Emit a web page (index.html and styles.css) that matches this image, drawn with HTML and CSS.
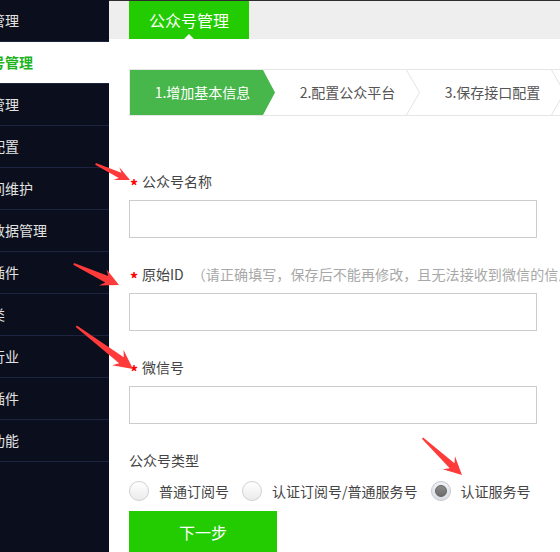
FILE: index.html
```html
<!DOCTYPE html>
<html lang="zh-CN">
<head>
<meta charset="utf-8">
<title>公众号管理</title>
<link rel="stylesheet" href="styles.css">
</head>
<body>
<div class="page">
  <aside class="sidebar">
    <ul class="nav">
      <li class="nav-item">管理</li>
      <li class="nav-item active">号管理</li>
      <li class="nav-item">管理</li>
      <li class="nav-item">配置</li>
      <li class="nav-item">间维护</li>
      <li class="nav-item">数据管理</li>
      <li class="nav-item">插件</li>
      <li class="nav-item">类</li>
      <li class="nav-item">行业</li>
      <li class="nav-item">插件</li>
      <li class="nav-item">功能</li>
    </ul>
  </aside>
  <main class="main">
    <div class="tabbar">
      <div class="tab">公众号管理</div>
    </div>
    <div class="content">
      <div class="steps">
        <div class="step step-active">1.增加基本信息</div>
        <div class="step">2.配置公众平台<svg class="chev" width="14" height="45" viewBox="0 0 14 45"><polyline points="0.5,0 13.5,22.5 0.5,45" fill="none" stroke="#e3e3e3" stroke-width="1"/></svg></div>
        <div class="step">3.保存接口配置<svg class="chev" width="14" height="45" viewBox="0 0 14 45"><polyline points="0.5,0 13.5,22.5 0.5,45" fill="none" stroke="#e3e3e3" stroke-width="1"/></svg></div>
      </div>
      <form class="form">
        <div class="field">
          <div class="label"><span class="req">*</span><span class="ltext">公众号名称</span></div>
          <input class="input" type="text">
        </div>
        <div class="field">
          <div class="label"><span class="req">*</span><span class="ltext">原始ID</span><span class="hint">（请正确填写，保存后不能再修改，且无法接收到微信的信息）</span></div>
          <input class="input" type="text">
        </div>
        <div class="field">
          <div class="label"><span class="req">*</span><span class="ltext">微信号</span></div>
          <input class="input" type="text">
        </div>
        <div class="label">公众号类型</div>
        <div class="radios">
          <label class="radio"><span class="dot"></span><span>普通订阅号</span></label>
          <label class="radio"><span class="dot"></span><span>认证订阅号/普通服务号</span></label>
          <label class="radio"><span class="dot checked"><span class="inner"></span></span><span>认证服务号</span></label>
        </div>
        <button class="btn" type="button">下一步</button>
      </form>
    </div>
  </main>
  <svg class="annot" width="560" height="552" viewBox="0 0 560 552">
    <g fill="#ff3a3a">
      <g transform="translate(130 180) rotate(25)">
        <polygon points="0,0 -15,-7 -11,-3 -38,-0.9 -38,0.9 -11,3 -15,7"/>
      </g>
      <g transform="translate(119 285) rotate(25)">
        <polygon points="0,0 -18,-9 -13.5,-3.5 -50,-0.9 -50,0.9 -13.5,3.5 -18,9"/>
      </g>
      <g transform="translate(133 369) rotate(37)">
        <polygon points="0,0 -19,-9.5 -14.5,-3.8 -71,-0.9 -71,0.9 -14.5,3.8 -19,9.5"/>
      </g>
      <g transform="translate(462 475) rotate(43)">
        <polygon points="0,0 -18,-9 -13.5,-3.5 -54,-0.9 -54,0.9 -13.5,3.5 -18,9"/>
      </g>
    </g>
  </svg>
</div>
</body>
</html>
```

FILE: styles.css
```css
* {
  box-sizing: border-box;
}
html, body {
  margin: 0;
  padding: 0;
  background: #ffffff;
}
body {
  font-family: "Noto Sans CJK SC", "Noto Sans", sans-serif;
  font-size: 14px;
  color: #444444;
}
.page {
  position: relative;
  display: flex;
  width: 560px;
  height: 552px;
  overflow: hidden;
}
.sidebar {
  flex: 0 0 109px;
  width: 109px;
  height: 552px;
  background: #0b0f1d;
  overflow: hidden;
}
.nav {
  list-style: none;
  margin: 0;
  padding: 0;
}
.nav-item {
  height: 42px;
  line-height: 41px;
  border-bottom: 1px solid #1d2440;
  color: #e2e2e2;
  font-size: 14px;
  white-space: nowrap;
  text-indent: -9px;
  overflow: hidden;
}
.nav-item.active {
  background: #ffffff;
  color: #1db31d;
  font-weight: bold;
}
.main {
  flex: 1 1 auto;
  min-width: 0;
  overflow: hidden;
}
.tabbar {
  height: 39px;
  background: #eeeeee;
  border-top: 1px solid #2e2e2e;
  padding-left: 20px;
}
.tab {
  position: relative;
  width: 120px;
  height: 38px;
  background: #22cc00;
  color: #ffffff;
  font-size: 16px;
  line-height: 38px;
  text-align: center;
}
.tab::after {
  content: "";
  position: absolute;
  left: 55px;
  bottom: 0;
  border-left: 5px solid transparent;
  border-right: 5px solid transparent;
  border-bottom: 5px solid #ffffff;
}
.content {
  padding-left: 20px;
}
.steps {
  display: flex;
  margin-top: 30px;
  height: 47px;
  width: 460px;
  border: 1px solid #e6e6e6;
  border-right: none;
}
.step {
  position: relative;
  flex: 0 0 145px;
  height: 45px;
  line-height: 45px;
  text-align: center;
  color: #555555;
  font-size: 14px;
  white-space: nowrap;
}
.step-active {
  background: #47b64b;
  color: #ffffff;
  clip-path: polygon(0 0, calc(100% - 12px) 0, 100% 50%, calc(100% - 12px) 100%, 0 100%);
}
.chev {
  position: absolute;
  right: 0;
  top: 0;
  display: block;
}
.form {
  margin-top: 55px;
}
.field {
  margin-bottom: 26px;
}
.label {
  display: flex;
  align-items: center;
  height: 20px;
  line-height: 20px;
  white-space: nowrap;
  color: #444444;
  margin-bottom: 9px;
}
.req {
  flex: 0 0 13px;
  width: 13px;
  height: 20px;
  padding-left: 1px;
  padding-top: 4px;
  color: #ff0000;
  font-size: 16px;
  font-weight: bold;
  line-height: 20px;
}
.ltext {
  flex: 0 0 auto;
}
.hint {
  flex: 0 0 auto;
  margin-left: 8px;
  color: #a8a8a8;
  letter-spacing: 0.1px;
}
.input {
  display: block;
  width: 408px;
  height: 38px;
  margin: 0;
  border: 1px solid #cccccc;
  background: #ffffff;
  outline: none;
  font: inherit;
}
.radios {
  display: flex;
  align-items: center;
  gap: 13px;
  height: 20px;
  margin-top: 11px;
}
.radio {
  display: flex;
  align-items: center;
  gap: 10px;
  color: #444444;
  white-space: nowrap;
  line-height: 20px;
}
.dot {
  display: grid;
  place-items: center;
  width: 20px;
  height: 20px;
  border-radius: 50%;
  border: 1px solid #d2d2d2;
  background: linear-gradient(#ffffff, #ebebeb);
  box-shadow: 0 0 1px rgba(0,0,0,0.08);
}
.dot.checked {
  background: linear-gradient(#eef0f3, #dadee4);
  border-color: #c5c9cf;
}
.inner {
  width: 12px;
  height: 12px;
  border-radius: 50%;
  background: linear-gradient(#8a8a8a, #6c6c6c);
  border: 1px solid #626262;
}
.btn {
  display: block;
  margin-top: 10px;
  width: 148px;
  height: 42px;
  border: none;
  background: #22cc00;
  color: #ffffff;
  font-family: inherit;
  font-size: 16px;
  padding: 0;
}
.annot {
  position: absolute;
  left: 0;
  top: 0;
  pointer-events: none;
}
```
